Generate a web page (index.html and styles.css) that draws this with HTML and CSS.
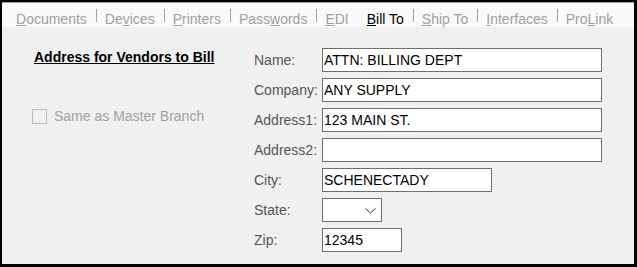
FILE: index.html
```html
<!DOCTYPE html>
<html lang="en">
<head>
    <meta charset="UTF-8">
    <title>Bill To</title>
    <link rel="stylesheet" href="styles.css">
</head>
<body>
    <div class="frame">
        <div class="tabs">
            <span class="tab"><u>D</u>ocuments</span><span class="sep"></span>
            <span class="tab">De<u>v</u>ices</span><span class="sep"></span>
            <span class="tab"><u>P</u>rinters</span><span class="sep"></span>
            <span class="tab">Pass<u>w</u>ords</span><span class="sep"></span>
            <span class="tab"><u>E</u>DI</span><span class="sep hidden"></span>
            <span class="tab active"><u>B</u>ill To</span><span class="sep"></span>
            <span class="tab"><u>S</u>hip To</span><span class="sep"></span>
            <span class="tab"><u>I</u>nterfaces</span><span class="sep"></span>
            <span class="tab">Pro<u>L</u>ink</span>
        </div>

        <div class="page">
            <div class="side">
                <div class="heading">Address for Vendors to Bill</div>
                <label class="check"><span class="box"></span>Same as Master Branch</label>
            </div>

            <div class="form">
                <label class="lbl">Name:</label>
                <input class="field wide" type="text" value="ATTN: BILLING DEPT" readonly>
                <label class="lbl">Company:</label>
                <input class="field wide" type="text" value="ANY SUPPLY" readonly>
                <label class="lbl">Address1:</label>
                <input class="field wide" type="text" value="123 MAIN ST." readonly>
                <label class="lbl">Address2:</label>
                <input class="field wide" type="text" value="" readonly>
                <label class="lbl">City:</label>
                <input class="field city" type="text" value="SCHENECTADY" readonly>
                <label class="lbl">State:</label>
                <div class="field select">
                    <svg class="chev" width="11" height="6" viewBox="0 0 11 6">
                        <path d="M0.5 0.5 L5.5 5 L10.5 0.5" fill="none" stroke="#333" stroke-width="1"/>
                    </svg>
                </div>
                <label class="lbl">Zip:</label>
                <input class="field zip" type="text" value="12345" readonly>
            </div>
        </div>
    </div>
</body>
</html>
```

FILE: styles.css
```css
body {
    margin: 0;
    font-family: "Liberation Sans", Arial, sans-serif;
    font-size: 14px;
    line-height: 16px;
}
.frame {
    width: 637px;
    height: 267px;
    box-sizing: border-box;
    border-style: solid;
    border-color: #000;
    border-width: 2px 3px 3px 2px;
    background: #f0f0f0;
}
.tabs {
    display: flex;
    align-items: flex-start;
    height: 25px;
    box-sizing: border-box;
    padding: 6px 0 0 6px;
    border-top: 1px solid #a0a0a0;
    background: #f9f9f9;
    color: #a0a0a0;
}
.tab {
    padding: 2px 9px 0 8px;
    white-space: nowrap;
}
.tab.active {
    color: #000;
}
.sep {
    width: 1px;
    height: 13px;
    background: #a0a0a0;
}
.sep.hidden {
    background: transparent;
}
.page {
    display: flex;
    padding: 21px 0 0 32px;
}
.side {
    width: 220px;
    display: flex;
    flex-direction: column;
    align-items: flex-start;
}
.heading {
    margin-top: 1px;
    font-weight: bold;
    text-decoration: underline;
    color: #000;
}
.check {
    display: flex;
    align-items: center;
    margin: 43px 0 0 -2px;
    color: #a0a0a0;
}
.box {
    width: 13px;
    height: 13px;
    margin-right: 7px;
    border: 1px solid #bcbcbc;
    background: #f0f0f0;
}
.form {
    display: grid;
    grid-template-columns: 68px auto;
    grid-auto-rows: 24px;
    row-gap: 6px;
    justify-items: start;
}
.lbl {
    align-self: center;
    color: #555;
}
.field {
    height: 24px;
    box-sizing: border-box;
    margin: 0;
    padding: 0 1px;
    border: 1px solid #6e6e6e;
    border-radius: 0;
    background: #fff;
    font-family: "Liberation Sans", Arial, sans-serif;
    font-size: 14px;
    color: #000;
    outline: none;
}
.wide {
    width: 280px;
}
.city {
    width: 170px;
}
.zip {
    width: 80px;
}
.select {
    width: 60px;
    display: flex;
    justify-content: flex-end;
    align-items: flex-start;
    padding: 9px 5px 0 0;
}
```
